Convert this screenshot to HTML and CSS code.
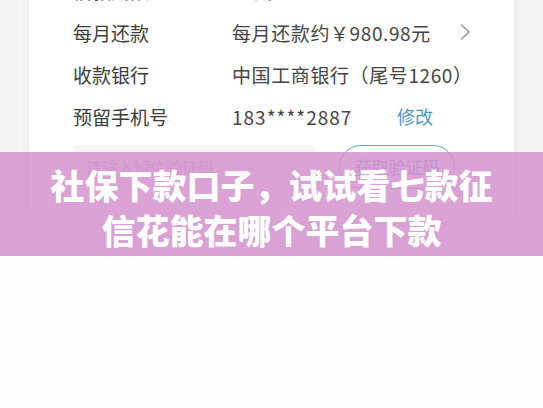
FILE: index.html
```html
<!DOCTYPE html>
<html lang="zh-CN">
<head>
  <meta charset="UTF-8">
  <meta name="viewport" content="width=device-width, initial-scale=1.0">
  <title>社保下款口子</title>
  <link rel="stylesheet" href="styles.css">
</head>
<body>
  <div class="shot">
    <div class="card">
      <div class="row">
        <span class="label">借款期限</span>
        <span class="value">12期</span>
      </div>
      <div class="row">
        <span class="label">每月还款</span>
        <span class="value">每月还款约￥980.98元</span>
        <svg class="arrow" width="12" height="18" viewBox="0 0 12 18">
          <path d="M2 1.5 L10 9 L2 16.5" fill="none" stroke="#9a9a9a" stroke-width="1.6"/>
        </svg>
      </div>
      <div class="row">
        <span class="label">收款银行</span>
        <span class="value">中国工商银行（尾号1260）</span>
      </div>
      <div class="row">
        <span class="label">预留手机号</span>
        <span class="value phone">183****2887</span>
        <span class="edit">修改</span>
      </div>
      <div class="code-row">
        <div class="code-input">请输入短信验证码</div>
        <div class="code-btn">获取验证码</div>
      </div>
    </div>
    <div class="banner">
      <h1>社保下款口子，试试看七款征<br>信花能在哪个平台下款</h1>
    </div>
  </div>
</body>
</html>
```

FILE: styles.css
```css
body {
  margin: 0;
  background-color: #fdfdfd;
  font-family: "Noto Sans CJK SC", "Noto Sans", sans-serif;
}
.shot {
  position: relative;
  height: 256px;
  overflow: hidden;
  background-color: #f5f5f5;
}
.card {
  margin: -43px 29px 0 29px;
  padding: 12px 0 33px 44px;
  background-color: #fff;
  border-radius: 6px;
  box-shadow: 0 0 10px rgba(0, 0, 0, 0.07);
}
.row {
  display: flex;
  align-items: center;
  height: 42px;
  font-size: 19px;
  color: #3d3d3d;
}
.label {
  width: 159px;
}
.value {
  color: #454545;
  letter-spacing: 0.6px;
}
.phone {
  width: 165px;
  letter-spacing: 1px;
}
.edit {
  color: #4a97cc;
  font-size: 18px;
}
.arrow {
  margin-left: auto;
  margin-right: 43px;
}
.code-row {
  display: flex;
  align-items: center;
  margin-top: 8px;
  gap: 24px;
}
.code-input {
  width: 229px;
  height: 44px;
  padding-left: 13px;
  line-height: 44px;
  background-color: #f6f6f6;
  border-radius: 4px;
  color: #b5b5b5;
  font-size: 16px;
}
.code-btn {
  width: 114px;
  height: 42px;
  line-height: 42px;
  text-align: center;
  border: 1.5px solid #5aa6d6;
  border-radius: 22px;
  color: #4a97cc;
  font-size: 17px;
}
.banner {
  position: absolute;
  left: 0;
  right: 0;
  bottom: 0;
  height: 104px;
  background-color: rgba(212, 146, 206, 0.85);
  display: flex;
  align-items: center;
  justify-content: center;
}
.banner h1 {
  margin: 6px 0 0 0;
  color: #fff;
  font-size: 34px;
  font-weight: 900;
  line-height: 45px;
  text-align: center;
}
```
